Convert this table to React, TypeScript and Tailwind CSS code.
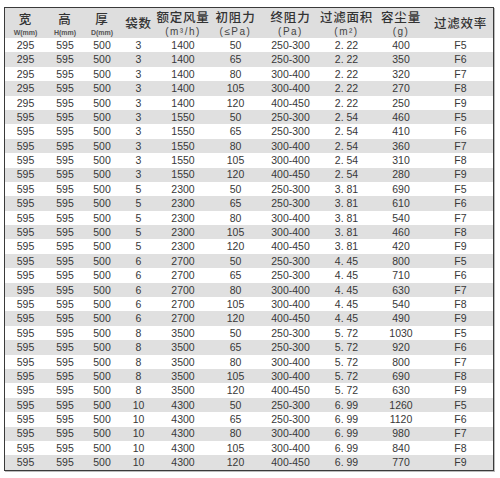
const groups = [
  { w: "295", bags: "3", flow: "1400", area: "2. 22", dust: ["400", "350", "320", "270", "250"] },
  { w: "595", bags: "3", flow: "1550", area: "2. 54", dust: ["460", "410", "360", "310", "280"] },
  { w: "595", bags: "5", flow: "2300", area: "3. 81", dust: ["690", "610", "540", "460", "420"] },
  { w: "595", bags: "6", flow: "2700", area: "4. 45", dust: ["800", "710", "630", "540", "490"] },
  { w: "595", bags: "8", flow: "3500", area: "5. 72", dust: ["1030", "920", "800", "690", "630"] },
  { w: "595", bags: "10", flow: "4300", area: "6. 99", dust: ["1260", "1120", "980", "840", "770"] },
]

const initial = ["50", "65", "80", "105", "120"]
const final = ["250-300", "250-300", "300-400", "300-400", "400-450"]
const grade = ["F5", "F6", "F7", "F8", "F9"]

const rows = groups.flatMap((g) =>
  initial.map((p, i) => [g.w, "595", "500", g.bags, g.flow, p, final[i], g.area, g.dust[i], grade[i]])
)

const cols = "grid-cols-[41px_38px_36px_37px_52px_53px_57px_55px_54px_65px]"

function Head({ top, sub, small }: { top: string; sub?: string; small?: boolean }) {
  return (
    <div className="flex flex-col items-center justify-center whitespace-nowrap">
      <span className="h-[18px] font-['Noto_Sans_CJK_SC',sans-serif] text-[12.5px] font-medium leading-[18px] tracking-[0.8px] text-[#333]">
        {top}
      </span>
      {sub && (
        <span
          className={
            small
              ? "h-[9px] text-[7px] font-bold leading-[9px] text-[#555]"
              : "h-[12px] text-[10px] leading-[12px] tracking-[1.5px] text-[#444]"
          }
        >
          {sub}
        </span>
      )}
    </div>
  )
}

export default function App() {
  return (
    <div className="h-[478px] w-[500px] bg-white pl-[4px] pt-[7px] font-['Liberation_Sans','Noto_Sans_CJK_SC',sans-serif]">
      <div className="w-[490px] border border-[#3a3a3a] shadow-[1px_1px_0_#bbb]">
        <div className={`grid h-[30px] ${cols} bg-[#dedede]`}>
          <Head top="宽" sub="W(mm)" small />
          <Head top="高" sub="H(mm)" small />
          <Head top="厚" sub="D(mm)" small />
          <Head top="袋数" />
          <Head top="额定风量" sub="(m³/h)" />
          <Head top="初阻力" sub="(≤Pa)" />
          <Head top="终阻力" sub="(Pa)" />
          <Head top="过滤面积" sub="(m²)" />
          <Head top="容尘量" sub="(g)" />
          <Head top="过滤效率" />
        </div>
        {rows.map((r, i) => (
          <div
            key={i}
            className={`grid h-[14.4px] ${cols} items-center text-center text-[10.5px] leading-none text-[#383838] ${
              i % 2 === 1 ? "bg-[#e0e0e0]" : "bg-white"
            }`}
          >
            {r.map((c, j) => (
              <span key={j}>{c}</span>
            ))}
          </div>
        ))}
      </div>
    </div>
  )
}
